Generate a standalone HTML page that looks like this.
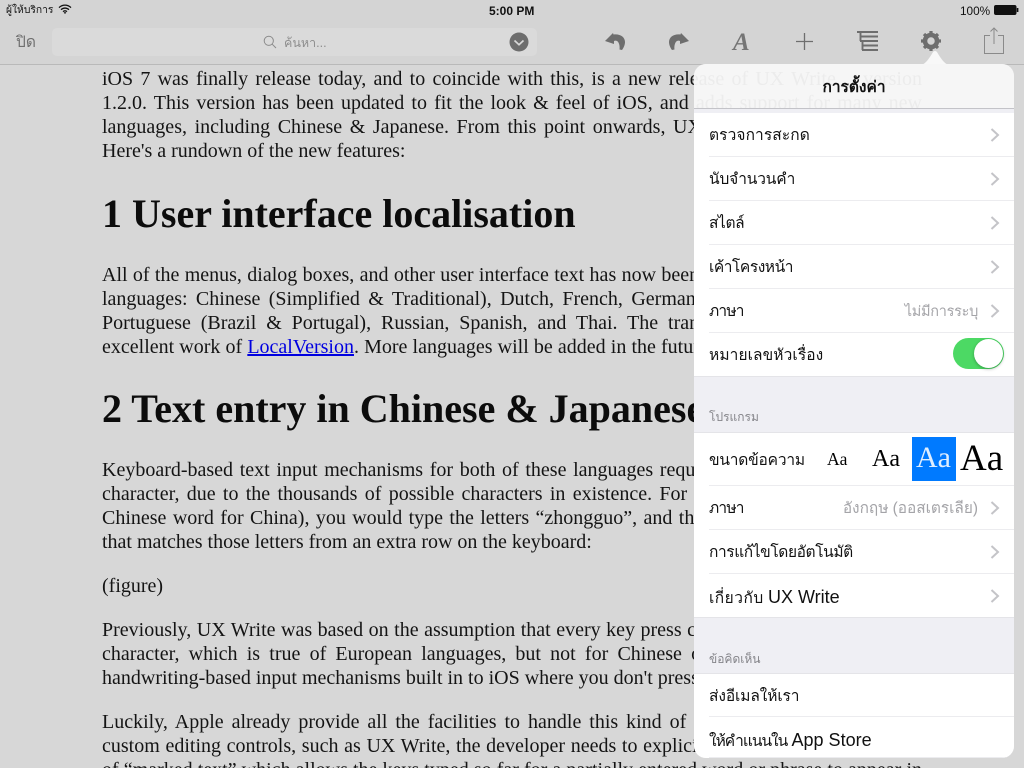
<!DOCTYPE html>
<html lang="th"><head><meta charset="utf-8"><title>UX Write</title>
<style>
html,body{margin:0;padding:0;width:1024px;height:768px;overflow:hidden;background:#d7d7d7}
*{box-sizing:border-box}
body{position:relative;font-family:"Liberation Sans","DejaVu Sans","Noto Sans CJK SC",sans-serif}
.abs{position:absolute}
#doc{position:absolute;left:102px;top:0;width:820px;font-family:"Liberation Serif",serif;color:#141414;font-size:20px}
.l{position:absolute;left:0;width:820px;height:24px;line-height:24px;white-space:normal;text-align:justify;text-align-last:justify;overflow:hidden}
.e{text-align-last:left}
.h{position:absolute;left:0;white-space:nowrap;font-weight:bold;font-size:40px;line-height:44px;color:#0c0c0c}
.sp{display:inline-block;height:1px}
a{color:#0000e0}
#bar{position:absolute;left:0;top:0;width:1024px;height:65px;background:#d4d4d4;border-bottom:1px solid #b9b9b9}
.st{position:absolute;font-size:12px;color:#111;line-height:14px;white-space:nowrap}
#search{position:absolute;left:52px;top:28px;width:485px;height:28px;border-radius:5px;background:#dadada}
#panel{position:absolute;left:694px;top:64px;width:320px;height:694px;border-radius:12px;overflow:hidden;background:#efeff4}
#ph{position:absolute;left:0;top:0;width:320px;height:45px;background:#f6f6f6;border-bottom:1px solid #c3c3c8;overflow:hidden}
.ttl{position:absolute;left:0;top:2px;width:320px;text-align:center;font-weight:bold;font-size:15.5px;line-height:44px;color:#111}
.gh{position:absolute;left:-592px;width:820px;height:24px;line-height:24px;font-family:"Liberation Serif",serif;font-size:20px;color:#ececec;text-align:justify;text-align-last:justify;white-space:normal;overflow:hidden}
.r{position:absolute;left:0;width:320px;height:44px;background:#fff;font-size:15.5px;line-height:46px;color:#111;padding-left:15px;white-space:nowrap}
.r:after{content:"";position:absolute;left:15px;right:0;bottom:0;height:1px;background:#ececef}
.r.x:after{left:0;background:#e4e4e8}
.lat{font-size:18px}
.v{position:absolute;right:36px;top:0;color:#a4a4a8}
.c{position:absolute;right:13px;top:15px;width:12px;height:14px}
.sec{position:absolute;left:15px;font-size:12px;color:#85858a;line-height:16px;white-space:nowrap}
.aa{position:absolute;font-family:"Liberation Serif",serif;color:#000;line-height:1;white-space:nowrap}
</style></head>
<body>
<div id="doc">
<div class="l" style="top:67px">iOS 7 was finally release today, and to coincide with this, is a new release of UX Write <span class="sp" style="width:20px"></span>version</div>
<div class="l" style="top:91px">1.2.0. This version has been updated to fit the look &amp; feel of iOS, and adds support for many new</div>
<div class="l" style="top:115px">languages, including Chinese &amp; Japanese. From this point onwards, UX Write will be available in</div>
<div class="l e" style="top:139px">Here's a rundown of the new features:</div>
<div class="h" style="top:192px">1 User interface localisation</div>
<div class="l" style="top:263px">All of the menus, dialog boxes, and other user interface text has now been translated into several <span class="sp" style="width:36px"></span></div>
<div class="l" style="top:287px">languages: Chinese (Simplified &amp; Traditional), Dutch, French, German, Italian, Japanese, Korean,</div>
<div class="l" style="top:311px">Portuguese (Brazil &amp; Portugal), Russian, Spanish, and Thai. The translations were done by the</div>
<div class="l" style="top:335px">excellent work of <a href="#">LocalVersion</a>. More languages will be added in the future, as time goes by. <span class="sp" style="width:70px"></span></div>
<div class="h" style="top:387px">2 Text entry in Chinese &amp; Japanese</div>
<div class="l" style="top:458px">Keyboard-based text input mechanisms for both of these languages require multiple key presses per</div>
<div class="l" style="top:482px">character, due to the thousands of possible characters in existence. For example, to type 中国 (the</div>
<div class="l" style="top:506px">Chinese word for China), you would type the letters “zhongguo”, and then select the character <span class="sp" style="width:40px"></span></div>
<div class="l e" style="top:530px">that matches those letters from an extra row on the keyboard:</div>
<div class="l e" style="top:574px">(figure)</div>
<div class="l" style="top:618px">Previously, UX Write was based on the assumption that every key press corresponds to a single <span class="sp" style="width:44px"></span></div>
<div class="l" style="top:642px">character, which is true of European languages, but not for Chinese or Japanese, as well as the</div>
<div class="l e" style="top:666px">handwriting-based input mechanisms built in to iOS where you don't press individual keys at all.</div>
<div class="l" style="top:710px">Luckily, Apple already provide all the facilities to handle this kind of input, but apps that have <span class="sp" style="width:12px"></span></div>
<div class="l" style="top:734px">custom editing controls, such as UX Write, the developer needs to explicitly support the concept <span class="sp" style="width:34px"></span></div>
<div class="l" style="top:758px">of “marked text” which allows the keys typed so far for a partially entered word or phrase to appear in</div>
</div>

<div id="bar">
<div class="st" style="left:6px;top:4px;font-size:10.3px">ผู้ให้บริการ</div>
<svg class="abs" style="left:58px;top:4px" width="14" height="10" viewBox="0 0 14 10"><path d="M1 3.600C4.500.3 9.500.3 13 3.600M3 5.700c2.400-2.200 5.600-2.200 8 0M5 7.600c1.200-1 2.800-1 4 0" fill="none" stroke="#111" stroke-width="1.300"/><path d="M7 10 5.700 8.500C6.500 8 7.500 8 8.300 8.500Z" fill="#111"/></svg>
<div class="st" style="left:489px;top:4px;font-weight:bold;font-size:12px">5:00 PM</div>
<div class="st" style="left:960px;top:4px;font-size:11.800px">100%</div>
<svg class="abs" style="left:994px;top:5px" width="25" height="10" viewBox="0 0 25 10"><rect x=".5" y=".5" width="21.500" height="9" rx="1.500" fill="#111" stroke="#111"/><rect x="22.800" y="3" width="1.600" height="4" fill="#111"/></svg>
<div class="abs" style="left:16px;top:33px;font-size:15.500px;line-height:20px;color:#6f6f6f">ปิด</div>
<div id="search">
<svg class="abs" style="left:211px;top:7px" width="14" height="14" viewBox="0 0 14 14"><circle cx="5.800" cy="5.800" r="4.600" fill="none" stroke="#8b8b8b" stroke-width="1"/><path d="M9.200 9.200 13 13" stroke="#8b8b8b" stroke-width="1"/></svg>
<div class="abs" style="left:232px;top:6px;font-size:12.500px;line-height:18px;color:#8e8e8e">ค้นหา...</div>
<svg class="abs" style="left:457px;top:4px" width="20" height="20" viewBox="0 0 20 20"><circle cx="10" cy="10" r="9.500" fill="#6d6d6d"/><path d="M5.500 8.500 10 12.700 14.500 8.500" fill="none" stroke="#d8d8d8" stroke-width="1.700"/></svg>
</div>
<svg class="abs" style="left:603px;top:30px" width="24" height="22" viewBox="0 0 24 22"><path d="M2 11 10 3 10.500 4.500C17 3.500 22 7 22 12 22 15 20.500 18 19 20L16.500 19.500C17 16 16 12 14 11 13 10.500 12 10.500 11 11L11 14Z" fill="#6e6e6e"/></svg>
<svg class="abs" style="left:667px;top:30px" width="24" height="22" viewBox="0 0 24 22"><path d="M22 11 14 3 13.500 4.500C7 3.500 2 7 2 12 2 15 3.500 18 5 20L7.500 19.500C7 16 8 12 10 11 11 10.500 12 10.500 13 11L13 14Z" fill="#6e6e6e"/></svg>
<div class="abs" style="left:733px;top:29px;font-family:'Liberation Serif',serif;font-style:italic;font-weight:bold;font-size:25px;line-height:28px;color:#757575">A</div>
<svg class="abs" style="left:796px;top:33px" width="17" height="17" viewBox="0 0 17 17"><path d="M8.500 0V17M0 8.500H17" stroke="#6e6e6e" stroke-width="1.300"/></svg>
<svg class="abs" style="left:857px;top:31px" width="21" height="20" viewBox="0 0 21 20"><path d="M0 1H21M3 5.500H21M3 10H21M5 14.500H21M5 19H21M3.500 1V10M5.500 10V19" stroke="#6e6e6e" stroke-width="1.900" fill="none"/></svg>
<svg class="abs" style="left:921px;top:31px" width="20" height="20" viewBox="0 0 20 20"><circle cx="10" cy="10" r="6" fill="none" stroke="#6e6e6e" stroke-width="4.500"/><path d="M10 0V4M10 16V20M0 10H4M16 10H20M3 3 5.800 5.800M14.200 14.200 17 17M17 3 14.200 5.800M5.800 14.200 3 17" stroke="#6e6e6e" stroke-width="3.200"/></svg>
<svg class="abs" style="left:984px;top:27px" width="20" height="27" viewBox="0 0 20 27"><path d="M6 8.500H.5V26.500H19.500V8.500H14M10 1V17M6.500 4.500 10 1 13.500 4.500" fill="none" stroke="#8a8a8a" stroke-width="1"/></svg>
</div>

<svg class="abs" style="left:921px;top:48px" width="28" height="17" viewBox="0 0 28 17"><path d="M0 17C5 16 9 9 12 4 13 2.600 15 2.600 16 4 19 9 23 16 28 17Z" fill="#f8f8f8"/></svg>
<div id="panel">
<div id="ph">
<div class="gh" style="top:3px">iOS 7 was finally release today, and to coincide with this, is a new release of UX Write <span class="sp" style="width:20px"></span>version</div>
<div class="gh" style="top:27px">1.2.0. This version has been updated to fit the look &amp; feel of iOS, and adds support for many new</div>
<div class="ttl">การตั้งค่า</div>
</div>
<div class="r" style="top:49px"><span style="letter-spacing:.1px">ตรวจการสะกด</span><svg class="c" viewBox="0 0 12 14"><path d="M2.500 1 9 7 2.500 13" fill="none" stroke="#c4c4c8" stroke-width="2"/></svg></div>
<div class="r" style="top:93px"><span style="letter-spacing:-.15px">นับจำนวนคำ</span><svg class="c" viewBox="0 0 12 14"><path d="M2.500 1 9 7 2.500 13" fill="none" stroke="#c4c4c8" stroke-width="2"/></svg></div>
<div class="r" style="top:137px"><span style="letter-spacing:-.4px">สไตล์</span><svg class="c" viewBox="0 0 12 14"><path d="M2.500 1 9 7 2.500 13" fill="none" stroke="#c4c4c8" stroke-width="2"/></svg></div>
<div class="r" style="top:181px"><span style="letter-spacing:-.45px">เค้าโครงหน้า</span><svg class="c" viewBox="0 0 12 14"><path d="M2.500 1 9 7 2.500 13" fill="none" stroke="#c4c4c8" stroke-width="2"/></svg></div>
<div class="r" style="top:225px"><span style="letter-spacing:-.8px">ภาษา</span><span class="v" style="font-size:14.500px;letter-spacing:-.3px">ไม่มีการระบุ</span><svg class="c" viewBox="0 0 12 14"><path d="M2.500 1 9 7 2.500 13" fill="none" stroke="#c4c4c8" stroke-width="2"/></svg></div>
<div class="r x" style="top:269px"><span style="letter-spacing:.1px">หมายเลขหัวเรื่อง</span>
<div class="abs" style="left:259px;top:5px;width:51px;height:31px;border-radius:16px;background:#4cd964"></div>
<div class="abs" style="left:280px;top:6px;width:29px;height:29px;border-radius:50%;background:#fff;box-shadow:0 1px 3px rgba(0,0,0,.3)"></div>
</div>
<div class="sec" style="top:345px">โปรแกรม</div>
<div class="r" style="top:368px;border-top:1px solid #e4e4e8;line-height:55px;height:54px"><span style="letter-spacing:-.2px">ขนาดข้อความ</span>
<div class="aa" style="left:133px;top:18px;font-size:17.500px">Aa</div>
<div class="aa" style="left:178px;top:14px;font-size:24px">Aa</div>
<div class="abs" style="left:218px;top:4px;width:44px;height:44px;background:#007aff"></div>
<div class="aa" style="left:222px;top:10px;font-size:30px;color:#dfeeff">Aa</div>
<div class="aa" style="left:266px;top:7px;font-size:37px">Aa</div>
</div>
<div class="r" style="top:422px"><span style="letter-spacing:-.8px">ภาษา</span><span class="v" style="font-size:15.400px">อังกฤษ (ออสเตรเลีย)</span><svg class="c" viewBox="0 0 12 14"><path d="M2.500 1 9 7 2.500 13" fill="none" stroke="#c4c4c8" stroke-width="2"/></svg></div>
<div class="r" style="top:466px"><span style="letter-spacing:-.4px">การแก้ไขโดยอัตโนมัติ</span><svg class="c" viewBox="0 0 12 14"><path d="M2.500 1 9 7 2.500 13" fill="none" stroke="#c4c4c8" stroke-width="2"/></svg></div>
<div class="r x" style="top:510px"><span style="letter-spacing:.5px">เกี่ยวกับ</span> <span class="lat">UX Write</span><svg class="c" viewBox="0 0 12 14"><path d="M2.500 1 9 7 2.500 13" fill="none" stroke="#c4c4c8" stroke-width="2"/></svg></div>
<div class="sec" style="top:587px">ข้อคิดเห็น</div>
<div class="r" style="top:609px;border-top:1px solid #e4e4e8"><span style="letter-spacing:-.1px">ส่งอีเมลให้เรา</span></div>
<div class="r" style="top:653px;height:41px"><span style="letter-spacing:-1px">ให้คำแนนใน</span> <span class="lat">App Store</span></div>
</div>
</body></html>
